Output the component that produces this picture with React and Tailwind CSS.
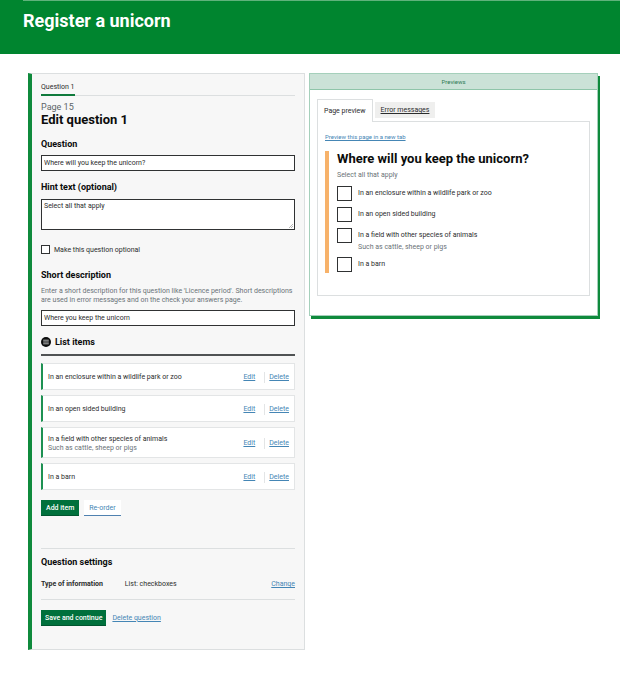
const items = [
  { label: "In an enclosure within a wildlife park or zoo" },
  { label: "In an open sided building" },
  {
    label: "In a field with other species of animals",
    hint: "Such as cattle, sheep or pigs",
  },
  { label: "In a barn" },
];

function TextLink({ children, className = "" }) {
  return (
    <a
      href="#"
      className={`text-[#4586b5] underline decoration-[#4586b5] underline-offset-1 ${className}`}
    >
      {children}
    </a>
  );
}

function Label({ htmlFor, children, className = "" }) {
  return (
    <label
      htmlFor={htmlFor}
      className={`block text-[9px] leading-3 font-bold text-[#0b0c0c] ${className}`}
    >
      {children}
    </label>
  );
}

function Header() {
  return (
    <header className="h-[54px] bg-[#00852f] pl-[23px]">
      <div className="border-t border-[#5fb27b] pt-2">
        <h1 className="text-[18px] leading-6 font-bold text-white">
          Register a unicorn
        </h1>
      </div>
    </header>
  );
}

function ListItem({ item }) {
  return (
    <li
      className={`flex items-center border border-l-2 border-[#e3e5e6] border-l-[#1d9152] bg-white px-[5px] pt-0.5 ${
        item.hint ? "h-[31px]" : "h-[27px]"
      }`}
    >
      <div className="flex-1 leading-[9px]">
        <p>{item.label}</p>
        {item.hint && <p className="text-[#6b7377]">{item.hint}</p>}
      </div>
      <TextLink className="mr-[9px]">Edit</TextLink>
      <TextLink className="border-l border-[#e3e5e6] pl-1">Delete</TextLink>
    </li>
  );
}

function EditPanel() {
  return (
    <form
      className="border border-l-4 border-[#dcdfe0] border-l-[#0f8a3c] bg-[#f7f7f7] pt-2 pr-[9px] pb-[23px] pl-[9px]"
      onSubmit={(e) => e.preventDefault()}
    >
      <div className="flex h-3.5 border-b border-[#dcdfe0]">
        <span className="h-3.5 border-b-2 border-[#0f7a3c] leading-[11px]">
          Question 1
        </span>
      </div>

      <p className="mt-1.5 text-[9px] leading-[10px] text-[#5c6468]">Page 15</p>
      <h2 className="text-[13px] leading-4 font-bold text-[#0b0c0c]">
        Edit question 1
      </h2>

      <Label htmlFor="question" className="mt-2.5">
        Question
      </Label>
      <input
        id="question"
        type="text"
        defaultValue="Where will you keep the unicorn?"
        className="mt-[5px] block h-4 w-full border border-[#303233] bg-white px-0.5"
      />

      <Label htmlFor="hint" className="mt-2.5">
        Hint text (optional)
      </Label>
      <div className="relative mt-1.5">
        <textarea
          id="hint"
          defaultValue="Select all that apply"
          className="block h-[31px] w-full resize-none border border-[#303233] bg-white px-0.5 py-px leading-[10px]"
        />
        <svg
          className="absolute right-[2px] bottom-[2px] size-1"
          viewBox="0 0 4 4"
          stroke="#888"
          strokeWidth="0.6"
        >
          <path d="M0 4L4 0M2 4L4 2" />
        </svg>
      </div>

      <div className="mt-3.5 flex h-[11px] items-center gap-1">
        <input
          id="optional"
          type="checkbox"
          className="size-[9px] appearance-none border border-[#303233] bg-white checked:bg-[#303233]"
        />
        <label htmlFor="optional" className="pt-px">
          Make this question optional
        </label>
      </div>

      <Label htmlFor="short" className="mt-3.5">
        Short description
      </Label>
      <p className="mt-1.5 leading-[9px] text-[#6b7377]">
        Enter a short description for this question like 'Licence period'. Short
        descriptions are used in error messages and on the check your answers
        page.
      </p>
      <input
        id="short"
        type="text"
        defaultValue="Where you keep the unicorn"
        className="mt-[5px] block h-4 w-full border border-[#303233] bg-white px-0.5"
      />

      <div className="mt-2.5 flex items-center gap-1 border-b-2 border-[#505354] pb-1.5">
        <svg className="size-2.5" viewBox="0 0 10 10">
          <circle cx="5" cy="5" r="5" fill="#0b0c0c" />
          <path
            d="M2.2 3.2H7.8M2.2 5H7.8M2.2 6.8H7.8"
            stroke="#ddd"
            strokeWidth="0.8"
          />
        </svg>
        <h3 className="text-[9px] leading-3 font-bold text-[#0b0c0c]">
          List items
        </h3>
      </div>

      <ul className="mt-[7px] flex flex-col gap-[5px]">
        {items.map((item) => (
          <ListItem key={item.label} item={item} />
        ))}
      </ul>

      <div className="mt-2.5 flex h-4 gap-[5px]">
        <button
          type="button"
          className="border-b border-[#00552f] bg-[#00703c] px-[5px] pt-px font-medium text-white"
        >
          Add item
        </button>
        <button
          type="button"
          className="border-b border-[#4f81b0] bg-white px-[5px] pt-px text-[#4586b5]"
        >
          Re-order
        </button>
      </div>

      <section className="mt-8 border-y border-[#dcdfe0] pt-[7px] pb-[9px]">
        <h3 className="text-[9px] leading-3 font-bold text-[#0b0c0c]">
          Question settings
        </h3>
        <dl className="mt-[11px] flex leading-[11px]">
          <dt className="w-[33%] font-bold">Type of information</dt>
          <dd className="flex-1">List: checkboxes</dd>
          <dd>
            <TextLink>Change</TextLink>
          </dd>
        </dl>
      </section>

      <div className="mt-2.5 flex h-4 items-center gap-1.5">
        <button
          type="submit"
          className="h-full border-b border-[#00552f] bg-[#00703c] px-1 pt-px font-medium text-white"
        >
          Save and continue
        </button>
        <TextLink>Delete question</TextLink>
      </div>
    </form>
  );
}

function PreviewPanel() {
  return (
    <section className="border border-[#a5d0bb] bg-white shadow-[2px_3px_0_#0f8a3c]">
      <h2 className="border-b border-[#8fc5a9] bg-[#cbe2d7] text-center text-[6px] leading-[15px] text-[#2f7a55]">
        Previews
      </h2>

      <div className="px-[7px] pt-[9px] pb-[19px]">
        <div className="flex items-center gap-0.5" role="tablist">
          <button
            type="button"
            role="tab"
            aria-selected="true"
            className="relative -mb-px h-[23px] border border-b-0 border-[#dcdfe0] bg-white px-1.5 pt-px"
          >
            Page preview
          </button>
          <button
            type="button"
            role="tab"
            aria-selected="false"
            className="h-4 bg-[#efefee] px-1.5 pt-px underline underline-offset-1"
          >
            Error messages
          </button>
        </div>

        <div className="border border-[#dcdfe0] px-[7px] pt-[9px] pb-[22px]">
          <TextLink className="block text-[6px] leading-[11px]">
            Preview this page in a new tab
          </TextLink>

          <fieldset className="mt-[9px] border-l-4 border-[#f7b26a] pl-2">
            <legend className="float-left w-full text-[13px] leading-4 font-bold text-[#0b0c0c]">
              Where will you keep the unicorn?
            </legend>
            <p className="clear-both pt-[3px] leading-[10px] text-[#6b7377]">
              Select all that apply
            </p>
            <ul className="mt-1.5 flex flex-col gap-1.5 pb-px">
              {items.map((item, i) => (
                <li key={item.label} className="flex gap-1.5">
                  <input
                    id={`option-${i}`}
                    type="checkbox"
                    className="size-[15px] shrink-0 appearance-none border border-[#303233] bg-white checked:bg-[#303233]"
                  />
                  <div>
                    <label htmlFor={`option-${i}`} className="block leading-[15px]">
                      {item.label}
                    </label>
                    {item.hint && (
                      <p className="leading-2 text-[#6b7377]">{item.hint}</p>
                    )}
                  </div>
                </li>
              ))}
            </ul>
          </fieldset>
        </div>
      </div>
    </section>
  );
}

export default function App() {
  return (
    <div className="min-h-screen bg-white font-['Roboto','Liberation_Sans',sans-serif] text-[7px] text-[#2b2d2d]">
      <Header />
      <main className="grid grid-cols-[277fr_289fr] items-start gap-1 pt-[19px] pr-[22px] pb-6 pl-7">
        <EditPanel />
        <PreviewPanel />
      </main>
    </div>
  );
}
